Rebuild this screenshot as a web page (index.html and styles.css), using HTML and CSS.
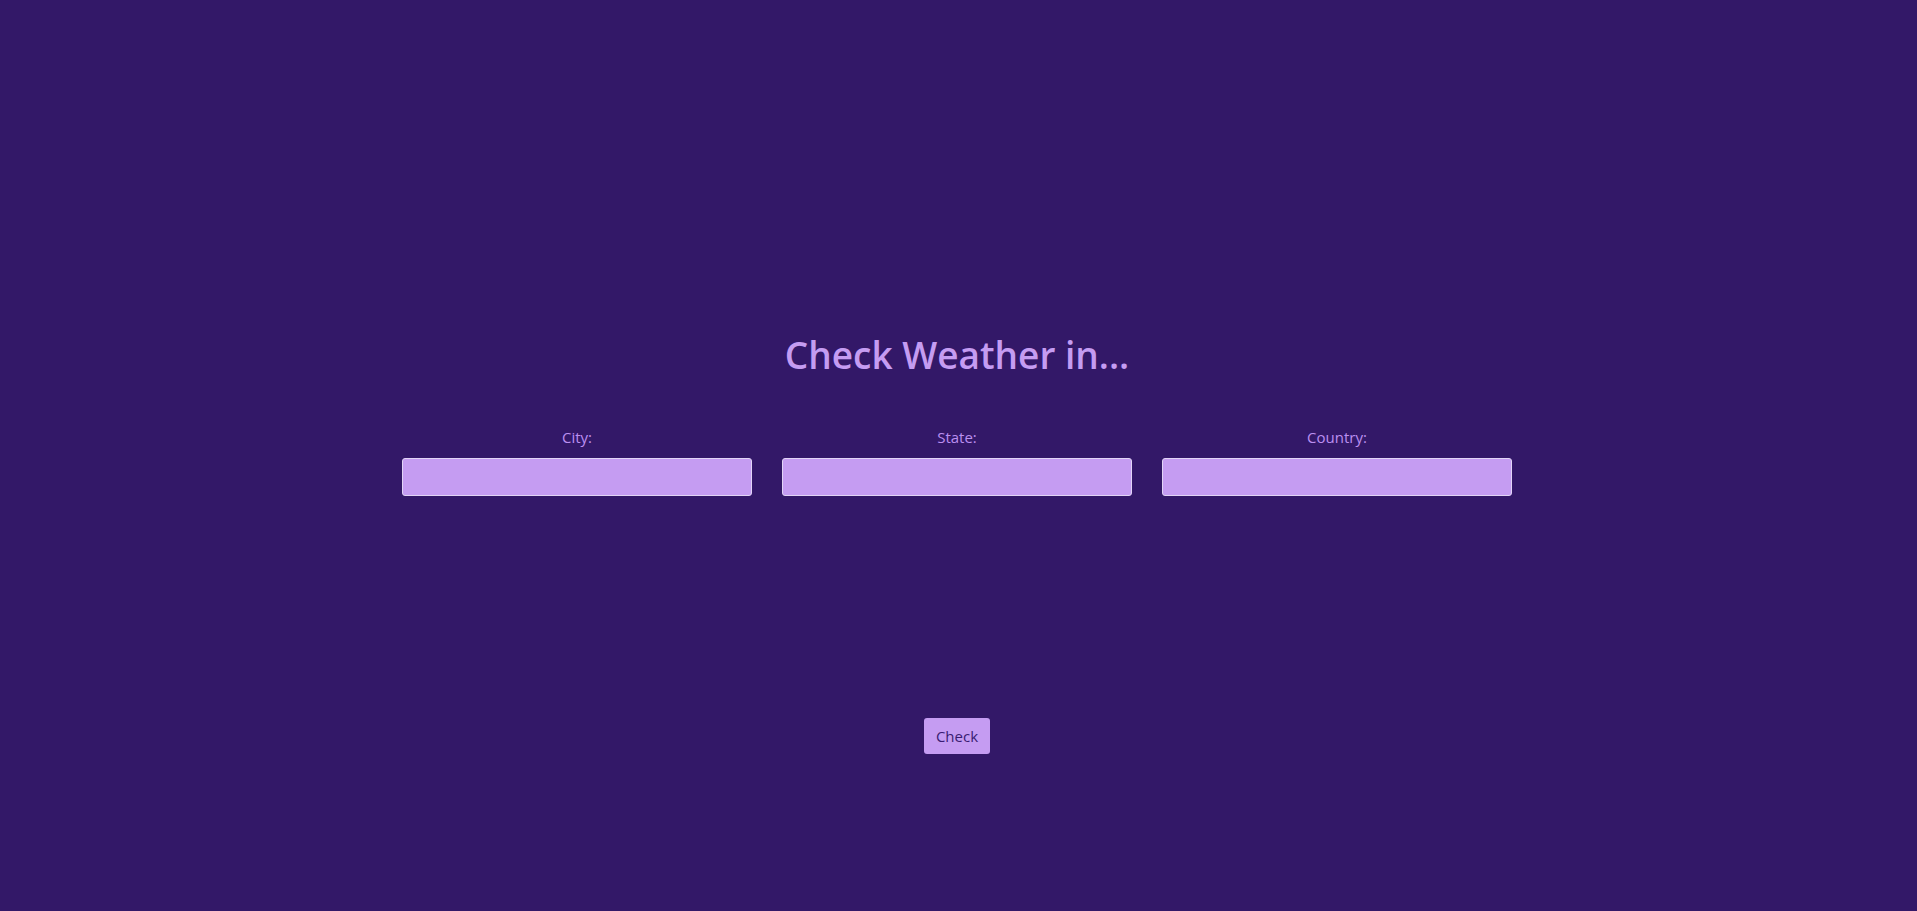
FILE: index.html
```html
<!DOCTYPE html>
<html lang="en">
<head>
<meta charset="utf-8">
<title>Check Weather</title>
<link rel="stylesheet" href="styles.css">
</head>
<body>
<main class="page">
  <h1 class="title">Check Weather in...</h1>
  <form class="form">
    <div class="fields">
      <div class="field">
        <label class="label" for="city">City:</label>
        <input class="input" id="city" type="text">
      </div>
      <div class="field">
        <label class="label" for="state">State:</label>
        <input class="input" id="state" type="text">
      </div>
      <div class="field">
        <label class="label" for="country">Country:</label>
        <input class="input" id="country" type="text">
      </div>
    </div>
    <button class="btn" type="button">Check</button>
  </form>
</main>
</body>
</html>
```
FILE: styles.css
```css
html, body {
  margin: 0;
  padding: 0;
  height: 100%;
}
body {
  background: #331868;
  font-family: "Open Sans", "Noto Sans", sans-serif;
  color: #c59cf2;
}
.page {
  display: flex;
  flex-direction: column;
  align-items: center;
  padding-top: 329px;
  padding-right: 3px;
}
.title {
  margin: 0;
  font-size: 37px;
  line-height: 52px;
  font-weight: 600;
  color: #c59cf2;
}
.form {
  display: flex;
  flex-direction: column;
  align-items: center;
  margin-top: 46px;
}
.fields {
  display: flex;
  gap: 30px;
}
.field {
  display: flex;
  flex-direction: column;
  align-items: center;
  gap: 11px;
}
.label {
  font-size: 15px;
  line-height: 20px;
  color: #bb8ff0;
}
.input {
  box-sizing: border-box;
  width: 350px;
  height: 38px;
  margin: 0;
  background: #c59cf2;
  border: 1px solid #e2d4f6;
  border-radius: 3px;
}
.btn {
  margin-top: 222px;
  box-sizing: border-box;
  width: 66px;
  height: 36px;
  padding: 0;
  background: #c59cf2;
  color: #3a1c72;
  border: none;
  border-radius: 3px;
  font-family: "Open Sans", "Noto Sans", sans-serif;
  font-size: 15px;
}
```
